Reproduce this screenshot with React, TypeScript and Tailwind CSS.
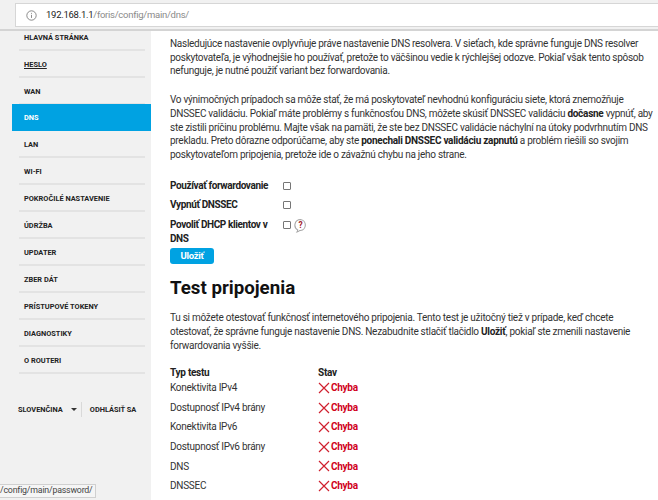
const menu = [
  'Hlavná stránka',
  'Heslo',
  'WAN',
  'DNS',
  'LAN',
  'Wi-Fi',
  'Pokročilé nastavenie',
  'Údržba',
  'Updater',
  'Zber dát',
  'Prístupové tokeny',
  'Diagnostiky',
  'O routeri',
];

const tests = [
  'Konektivita IPv4',
  'Dostupnosť IPv4 brány',
  'Konektivita IPv6',
  'Dostupnosť IPv6 brány',
  'DNS',
  'DNSSEC',
];

function Sidebar() {
  return (
    <aside className="w-[151px] shrink-0 bg-[#f1f1f1] pl-[12px]">
      <ul className="mt-[-7px]">
        {menu.map((item) => {
          const active = item === 'DNS';
          return (
            <li
              key={item}
              className={
                active
                  ? 'h-[27px] mt-[-1px] pt-[1px] bg-[#00a2e2] text-white flex items-center pl-[12px] text-[7.4px] font-bold uppercase whitespace-nowrap'
                  : 'h-[27px] ml-[7px] mr-[6px] pt-[3px] border-b-2 border-[#e3e3e3] flex items-center pl-[5px] text-[7.4px] font-bold uppercase whitespace-nowrap text-[#222]'
              }
            >
              <span className={item === 'Heslo' ? 'underline' : ''}>{item}</span>
            </li>
          );
        })}
      </ul>
      <div className="mt-[28px] ml-[6px] flex items-center text-[7.4px] font-bold uppercase whitespace-nowrap text-[#222]">
        <span>Slovenčina</span>
        <span className="ml-[8px] w-0 h-0 border-x-[3px] border-x-transparent border-t-[3px] border-t-[#333]" />
        <span className="ml-[4px] h-[15px] w-px bg-[#d9d9d9]" />
        <span className="ml-[8px]">Odhlásiť sa</span>
      </div>
    </aside>
  );
}

function CheckRow({ label, help }: { label: React.ReactNode; help?: boolean }) {
  return (
    <div className="flex items-start">
      <div className="w-[113px] font-bold text-[10px] leading-[13.7px] tracking-[-0.38px] text-[#222]">{label}</div>
      <span className="mt-[3px] h-[8px] w-[8px] border border-[#767676] bg-white rounded-[1px]" />
      {help && (
        <svg viewBox="0 0 14 15" className="ml-[3px] h-[15px] w-[13px]">
          <path d="M7 1a6 6 0 0 0-3 11.2c0 1-.3 1.6-.8 2.3 1.3-.2 2.4-.8 3-1.6H7A6 6 0 0 0 7 1z" fill="#fff" stroke="#a8a8a8" strokeWidth="1.2" />
          <text x="7" y="10.5" textAnchor="middle" fontSize="9" fontWeight="700" fill="#a3232c" fontFamily="Roboto">?</text>
        </svg>
      )}
    </div>
  );
}

export default function App() {
  return (
    <div className="w-[658px] h-[500px] overflow-hidden bg-white font-['Roboto',sans-serif] relative flex flex-col">
      <header className="h-[31px] shrink-0 bg-[#f1f1f1] border-b-2 border-[#d4d4d4] pt-[3px] pl-[15px]">
        <div className="h-[24px] bg-white border border-[#d6d6d6] border-r-0 flex items-center pl-[10px] text-[9.5px] tracking-[-0.27px]">
          <svg viewBox="0 0 16 16" className="w-[11px] h-[11px] mr-[9px]" fill="none" stroke="#666" strokeWidth="1.1">
            <circle cx="8" cy="8" r="6.8" />
            <path d="M8 7v4.5M8 4.2v1.3" />
          </svg>
          <span className="text-[#222]">192.168.1.1</span>
          <span className="text-[#8a8a8a]">/foris/config/main/dns/</span>
        </div>
      </header>

      <div className="flex flex-1 min-h-0">
        <Sidebar />
        <main className="flex-1 pl-[19px] pt-[6px] text-[10px] leading-[13.7px] tracking-[-0.27px] text-[#333] whitespace-nowrap">
          <p>
            Nasledujúce nastavenie ovplyvňuje práve nastavenie DNS resolvera. V sieťach, kde správne funguje DNS resolver
            <br />
            poskytovateľa, je výhodnejšie ho používať, pretože to väčšinou vedie k rýchlejšej odozve. Pokiaľ však tento spôsob
            <br />
            nefunguje, je nutné použiť variant bez forwardovania.
          </p>
          <p className="mt-[15px]">
            Vo výnimočných prípadoch sa môže stať, že má poskytovateľ nevhodnú konfiguráciu siete, ktorá znemožňuje
            <br />
            DNSSEC validáciu. Pokiaľ máte problémy s funkčnosťou DNS, môžete skúsiť DNSSEC validáciu <b className="text-[#222]">dočasne</b> vypnúť, aby
            <br />
            ste zistili príčinu problému. Majte však na pamäti, že ste bez DNSSEC validácie náchylní na útoky podvrhnutím DNS
            <br />
            prekladu. Preto dôrazne odporúčame, aby ste <b className="text-[#222]">ponechali DNSSEC validáciu zapnutú</b> a problém riešili so svojim
            <br />
            poskytovateľom pripojenia, pretože ide o závažnú chybu na jeho strane.
          </p>

          <div className="mt-[17px] flex flex-col gap-[6px]">
            <CheckRow label="Používať forwardovanie" />
            <CheckRow label={<span className="whitespace-normal">Vypnúť DNSSEC</span>} />
            <CheckRow label={<span className="whitespace-normal">Povoliť DHCP klientov v DNS</span>} help />
          </div>
          <button className="mt-[3px] block h-[16px] w-[44px] rounded-[3px] bg-[#00a2e2] text-white font-bold text-[9.5px] leading-[16px]">
            Uložiť
          </button>

          <h1 className="mt-[12px] text-[18.7px] leading-[24px] tracking-normal font-bold text-[#111]">Test pripojenia</h1>

          <p className="mt-[11px]">
            Tu si môžete otestovať funkčnosť internetového pripojenia. Tento test je užitočný tiež v prípade, keď chcete
            <br />
            otestovať, že správne funguje nastavenie DNS. Nezabudnite stlačiť tlačidlo <b className="text-[#222]">Uložiť</b>, pokiaľ ste zmenili nastavenie
            <br />
            forwardovania vyššie.
          </p>

          <table className="mt-[13px] border-collapse">
            <thead>
              <tr>
                <th className="w-[148px] p-0 h-[12px] text-left font-bold text-[#222]">Typ testu</th>
                <th className="p-0 text-left font-bold text-[#222]">Stav</th>
              </tr>
            </thead>
            <tbody>
              {tests.map((name) => (
                <tr key={name} className="h-[19.6px]">
                  <td className="p-0 pb-[2px]">{name}</td>
                  <td className="p-0 pb-[2px]">
                    <span className="flex items-center">
                      <svg viewBox="0 0 12 12" className="w-[12px] h-[12px] mr-[1px]" stroke="#d0202e" strokeWidth="1.2" fill="none">
                        <path d="M1 1l10 10M11 1L1 11" />
                      </svg>
                      <span className="font-bold text-[#d0021b]">Chyba</span>
                    </span>
                  </td>
                </tr>
              ))}
            </tbody>
          </table>
        </main>
      </div>

      <div className="absolute left-0 bottom-[2px] h-[14px] w-[96px] bg-[#f5f5f5] border border-l-0 border-[#d0d0d0] flex items-center text-[8.8px] tracking-[-0.2px] text-[#444] whitespace-nowrap">
        /config/main/password/
      </div>
    </div>
  );
}
